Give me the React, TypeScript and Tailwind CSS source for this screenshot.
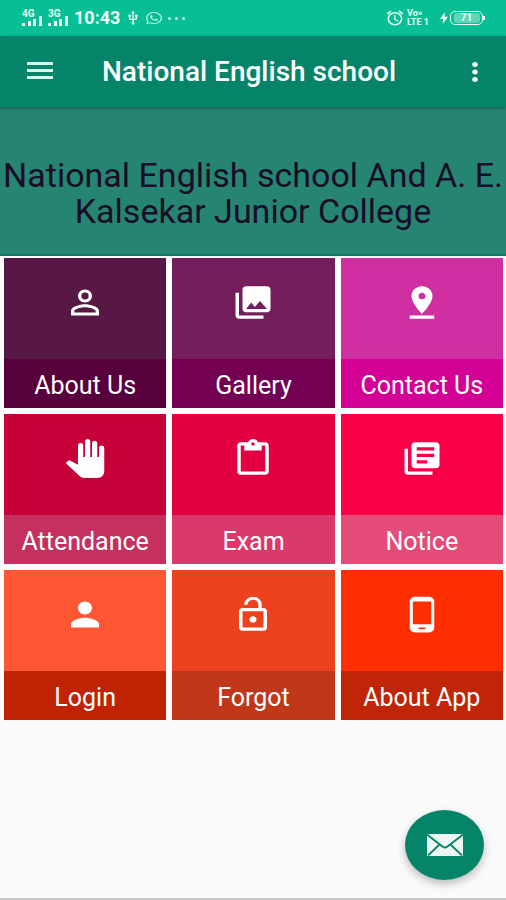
import type { IconType } from "react-icons";
import {
  MdAlarm,
  MdCollections,
  MdContentPaste,
  MdLibraryBooks,
  MdLockOpen,
  MdMenu,
  MdMoreVert,
  MdPanTool,
  MdPerson,
  MdPersonOutline,
  MdPhoneAndroid,
  MdPinDrop,
  MdUsb,
} from "react-icons/md";
import { FaWhatsapp } from "react-icons/fa";

type Tile = { label: string; icon: IconType; top: string; bottom: string };

const tiles: Tile[] = [
  { label: "About Us", icon: MdPersonOutline, top: "bg-[#581845]", bottom: "bg-[#58003c]" },
  { label: "Gallery", icon: MdCollections, top: "bg-[#741f5b]", bottom: "bg-[#740053]" },
  { label: "Contact Us", icon: MdPinDrop, top: "bg-[#d02fa1]", bottom: "bg-[#d30096]" },
  { label: "Attendance", icon: MdPanTool, top: "bg-[#c70039]", bottom: "bg-[#c6305e]" },
  { label: "Exam", icon: MdContentPaste, top: "bg-[#e20043]", bottom: "bg-[#db396b]" },
  { label: "Notice", icon: MdLibraryBooks, top: "bg-[#f80048]", bottom: "bg-[#e54b79]" },
  { label: "Login", icon: MdPerson, top: "bg-[#ff5733]", bottom: "bg-[#c02303]" },
  { label: "Forgot", icon: MdLockOpen, top: "bg-[#ec421e]", bottom: "bg-[#c03719]" },
  { label: "About App", icon: MdPhoneAndroid, top: "bg-[#ff2e00]", bottom: "bg-[#c12507]" },
];

function Signal({ label }: { label: string }) {
  return (
    <div className="relative h-4 w-5">
      <span className="absolute left-0 top-0 text-[10px] font-bold leading-[8px]">{label}</span>
      <svg viewBox="0 0 20 16" className="h-4 w-5" fill="currentColor" aria-hidden="true">
        <rect x="0" y="13" width="3" height="3" />
        <rect x="6" y="11" width="3" height="5" />
        <rect x="11" y="9" width="3" height="7" />
        <rect x="17" y="6" width="3" height="10" />
      </svg>
    </div>
  );
}

function StatusBar() {
  return (
    <div className="flex h-9 items-center justify-between bg-[#08be94] pl-[22px] pr-[21px] text-[#e9fff8]">
      <div className="flex items-center">
        <Signal label="4G" />
        <div className="w-[6px]" />
        <Signal label="3G" />
        <span className="ml-[6px] text-[18px] font-bold leading-5">10:43</span>
        <MdUsb className="ml-[5px] h-4 w-4" />
        <FaWhatsapp className="ml-[5px] h-[14px] w-4 opacity-80" preserveAspectRatio="none" />
        <div className="ml-[6px] flex gap-1 opacity-80">
          <span className="h-[3px] w-[3px] rounded-full bg-current" />
          <span className="h-[3px] w-[3px] rounded-full bg-current" />
          <span className="h-[3px] w-[3px] rounded-full bg-current" />
        </div>
      </div>
      <div className="flex items-center">
        <MdAlarm className="h-[18px] w-5" preserveAspectRatio="none" />
        <div className="ml-[2px] flex w-7 flex-col text-[9px] font-bold leading-[9px]">
          <span>Vo»</span>
          <span>LTE 1</span>
        </div>
        <svg viewBox="0 0 8 12" className="ml-[5px] h-3 w-2" fill="currentColor" aria-hidden="true">
          <path d="M5 0 0 7h3.2L2.6 12 8 4.8H4.6z" />
        </svg>
        <div className="ml-[2px] flex h-[14px] w-[33px] items-center justify-center rounded-[5px] border border-current">
          <span className="flex h-[10px] w-[26px] items-center justify-center rounded-[3px] bg-white/35 text-[10px] font-bold leading-[10px]">
            71
          </span>
        </div>
        <span className="h-1 w-[2px] bg-current" />
      </div>
    </div>
  );
}

function Header() {
  return (
    <header className="relative flex h-[71px] items-center bg-[#068469] pl-[22px] pr-[14px] text-white shadow-[0_1px_3px_rgba(0,0,0,0.35)]">
      <button type="button" aria-label="Open menu" className="text-[#d8f5ec]">
        <svg viewBox="0 0 36 36" className="h-9 w-9" fill="currentColor" aria-hidden="true">
          <path d="M5 8h26v3H5zM5 15h26v3H5zM5 22h26v3H5z" />
        </svg>
      </button>
      <h1 className="ml-11 flex-1 whitespace-nowrap text-[28px] font-medium leading-8">National English school</h1>
      <button type="button" aria-label="More options">
        <MdMoreVert className="h-[30px] w-[34px]" preserveAspectRatio="none" />
      </button>
    </header>
  );
}

function TileButton({ label, icon: Icon, top, bottom }: Tile) {
  return (
    <button type="button" className="flex flex-col text-white">
      <span className={`flex h-[101px] w-full justify-center pt-[25px] ${top}`}>
        <Icon className="h-[39px] w-[42px]" preserveAspectRatio="none" />
      </span>
      <span className={`flex h-[49px] w-full items-center justify-center pt-1 text-[25px] leading-7 ${bottom}`}>
        {label}
      </span>
    </button>
  );
}

export default function App() {
  return (
    <div className="flex min-h-screen flex-col border-b-2 border-[#c9c9c9] bg-[#fafafa] font-['Roboto',sans-serif]">
      <StatusBar />
      <Header />
      <section className="flex h-[149px] items-center justify-center border-b-2 border-[#0f7a63] bg-[#268473] pt-6">
        <h2 className="text-center text-[34px] leading-9 text-[#1a0d28]">
          National English school And A. E. Kalsekar Junior College
        </h2>
      </section>
      <main className="grid grid-cols-3 gap-[6px] bg-white pl-1 pr-[3px] pt-[2px]">
        {tiles.map((tile) => (
          <TileButton key={tile.label} {...tile} />
        ))}
      </main>
      <button
        type="button"
        aria-label="Send message"
        className="fixed bottom-5 right-[22px] flex h-[70px] w-[79px] items-center justify-center rounded-[50%] bg-[#068469] shadow-[0_4px_8px_rgba(0,0,0,0.25)]"
      >
        <svg viewBox="0 0 36 22" className="h-[22px] w-9" aria-hidden="true">
          <rect width="36" height="22" fill="#eef5f2" />
          <path
            d="M0 0.5 15.5 12.5Q18 14.5 20.5 12.5L36 0.5M1 21.5 12.5 10.5M35 21.5 23.5 10.5"
            fill="none"
            stroke="#068469"
            strokeWidth="1.8"
          />
        </svg>
      </button>
    </div>
  );
}
